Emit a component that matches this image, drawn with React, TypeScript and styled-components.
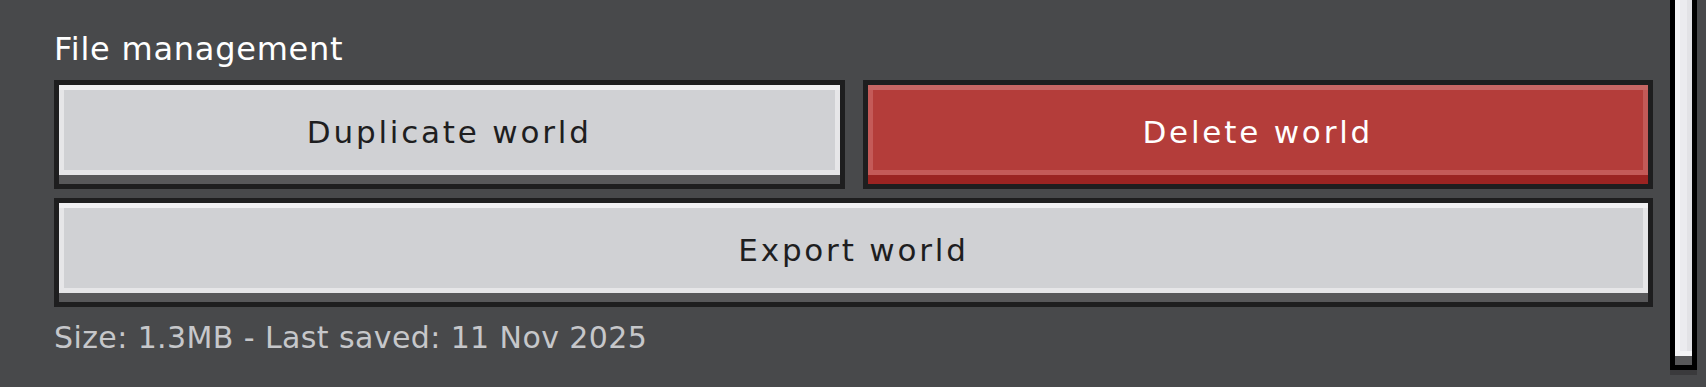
import styled, { createGlobalStyle } from "styled-components";

interface Tone {
  tone?: "light" | "danger";
}

interface SpanProp {
  wide?: boolean;
}

const GlobalStyle = createGlobalStyle`
  html, body {
    margin: 0;
    padding: 0;
    background-color: #48494b;
  }
  * {
    box-sizing: border-box;
  }
`;

const Page = styled.div`
  display: flex;
  flex-direction: row;
  align-items: flex-start;
  width: 1706px;
  min-height: 387px;
  background-color: #48494b;
  font-family: "DejaVu Sans", "Noto Sans", sans-serif;
`;

const Content = styled.div`
  flex: 1;
  display: flex;
  flex-direction: column;
  padding: 31px 17px 0 54px;
`;

const Heading = styled.h3`
  margin: 0 0 13px 0;
  font-size: 32px;
  line-height: 36px;
  font-weight: 400;
  letter-spacing: 0.75px;
  color: #ffffff;
`;

const ButtonGrid = styled.div`
  display: grid;
  grid-template-columns: 1fr 1fr;
  column-gap: 18px;
  row-gap: 9px;
`;

const faces = {
  light: {
    face: "#d0d1d4",
    top: "#f0f0f2",
    side: "#e6e6e8",
    bottom: "#58585a",
    text: "#1e1e1f",
  },
  danger: {
    face: "#b43d3a",
    top: "#c76664",
    side: "#c45a58",
    bottom: "#9b2422",
    text: "#ffffff",
  },
};

const Button = styled.button<Tone & SpanProp>`
  grid-column: ${(props) => (props.wide ? "1 / span 2" : "auto")};
  display: flex;
  align-items: center;
  justify-content: center;
  height: 109px;
  margin: 0;
  padding: 0 0 6px 0;
  border: 5px solid #1e1e1f;
  border-radius: 0;
  background-color: ${(props) => faces[props.tone ?? "light"].face};
  box-shadow:
    inset 0 -9px 0 ${(props) => faces[props.tone ?? "light"].bottom},
    inset 0 5px 0 ${(props) => faces[props.tone ?? "light"].top},
    inset 5px 0 0 ${(props) => faces[props.tone ?? "light"].side},
    inset -5px -14px 0 ${(props) => faces[props.tone ?? "light"].side};
  color: ${(props) => faces[props.tone ?? "light"].text};
  font-family: "DejaVu Sans", "Noto Sans", sans-serif;
  font-size: 31px;
  line-height: 36px;
  letter-spacing: 2.8px;
  cursor: pointer;
`;

const Meta = styled.div`
  margin-top: 13px;
  font-size: 30px;
  line-height: 36px;
  letter-spacing: 0.4px;
  color: #c6c7ca;
`;

const ScrollTrack = styled.div`
  width: 27px;
  margin-right: 9px;
  display: flex;
  flex-direction: column;
`;

const ScrollThumb = styled.div`
  height: 370px;
  border: 5px solid #000000;
  border-top: none;
  background-color: #ebebef;
  box-shadow:
    inset 0 -9px 0 #58585a,
    inset 0 -14px 0 #f4f4f6,
    inset 5px 0 0 #f6f6f8,
    inset -5px 0 0 #e2e2e6,
    0 5px 0 #3a3a3c;
`;

function App() {
  return (
    <Page>
      <GlobalStyle />
      <Content>
        <Heading>File management</Heading>
        <ButtonGrid>
          <Button tone="light">Duplicate world</Button>
          <Button tone="danger">Delete world</Button>
          <Button tone="light" wide>
            Export world
          </Button>
        </ButtonGrid>
        <Meta>Size: 1.3MB - Last saved: 11 Nov 2025</Meta>
      </Content>
      <ScrollTrack>
        <ScrollThumb />
      </ScrollTrack>
    </Page>
  );
}

export default App;
